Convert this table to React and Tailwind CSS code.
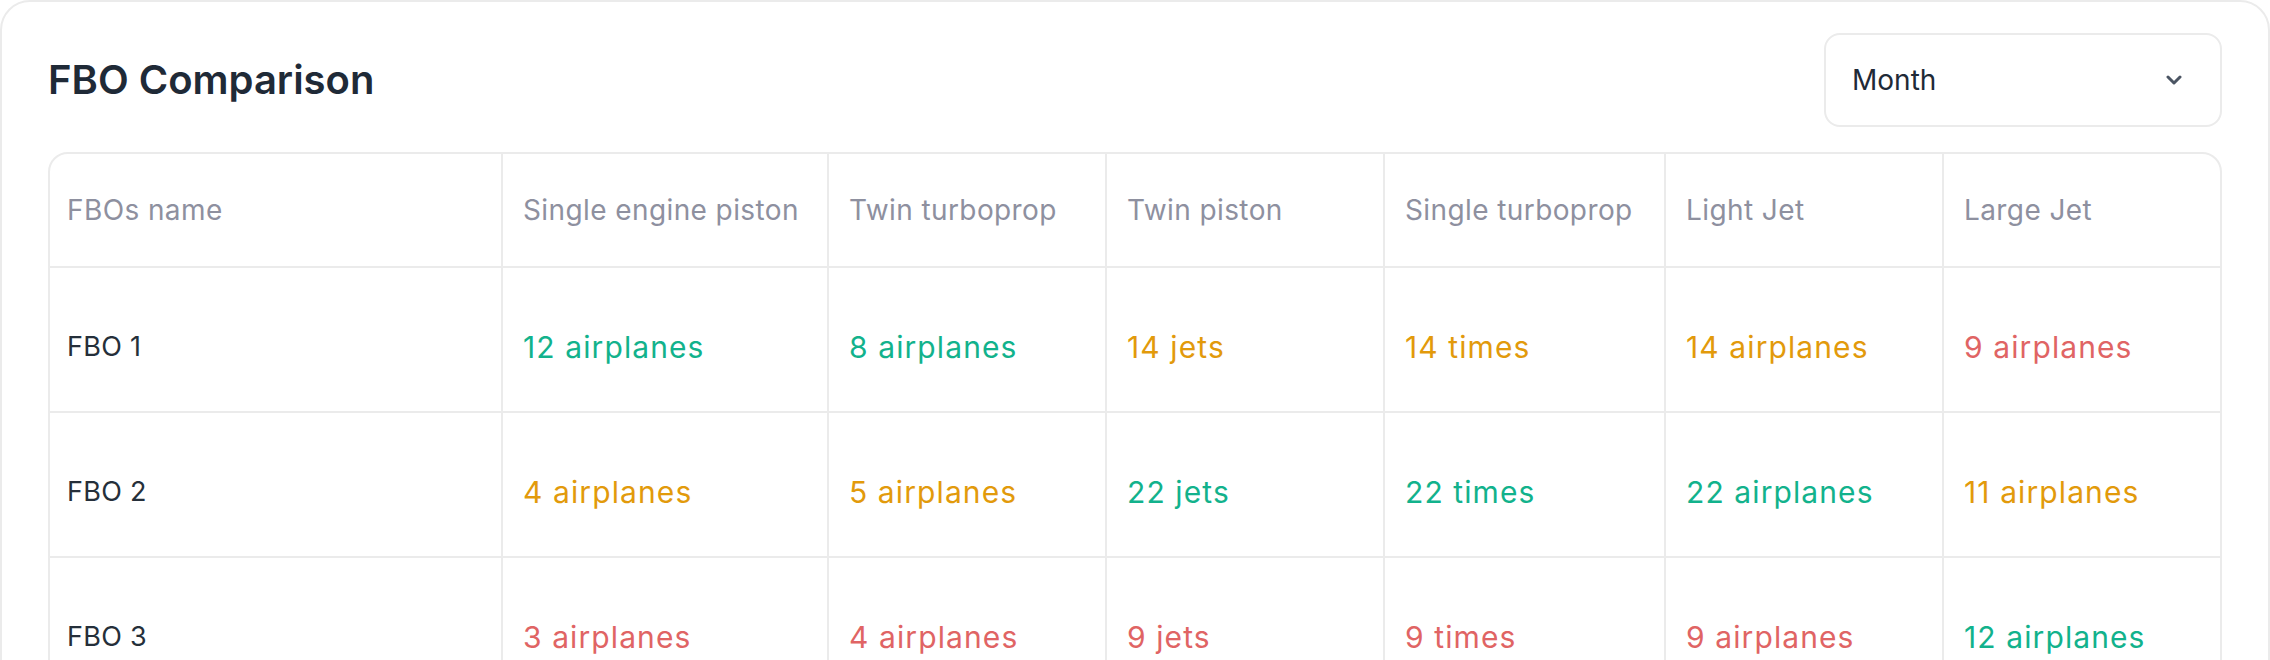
import React from "react";

const headers = [
  "FBOs name",
  "Single engine piston",
  "Twin turboprop",
  "Twin piston",
  "Single turboprop",
  "Light Jet",
  "Large Jet",
];

const G = "text-[#12b28c]";
const O = "text-[#e29a0b]";
const R = "text-[#e06464]";

const rows = [
  {
    name: "FBO 1",
    cells: [
      ["12 airplanes", G],
      ["8 airplanes", G],
      ["14 jets", O],
      ["14 times", O],
      ["14 airplanes", O],
      ["9 airplanes", R],
    ],
  },
  {
    name: "FBO 2",
    cells: [
      ["4 airplanes", O],
      ["5 airplanes", O],
      ["22 jets", G],
      ["22 times", G],
      ["22 airplanes", G],
      ["11 airplanes", O],
    ],
  },
  {
    name: "FBO 3",
    cells: [
      ["3 airplanes", R],
      ["4 airplanes", R],
      ["9 jets", R],
      ["9 times", R],
      ["9 airplanes", R],
      ["12 airplanes", G],
    ],
  },
];

export default function App() {
  return (
    <div className="w-[2270px] h-[660px] overflow-hidden bg-white font-['Inter',sans-serif]">
      <div className="w-full h-[720px] border-2 border-[#ebebeb] rounded-[30px] pt-[31px] px-[46px]">
        <div className="flex items-center justify-between">
          <h1 className="text-[40px] font-semibold text-[#1f2a37]">
            FBO Comparison
          </h1>
          <div className="w-[398px] h-[94px] border-2 border-[#ebebeb] rounded-[16px] flex items-center justify-between pl-[26px] pr-[38px]">
            <span className="text-[28px] text-[#1f2a37]">Month</span>
            <svg width="16" height="10" viewBox="0 0 16 10" fill="none">
              <path d="M2 2l6 6 6-6" stroke="#4b5563" strokeWidth="3" strokeLinecap="round" strokeLinejoin="round" />
            </svg>
          </div>
        </div>
        <div className="mt-[25px] border-2 border-[#ebebeb] rounded-t-[20px] overflow-hidden grid grid-cols-[451px_326px_278px_278px_281px_278px_278px]">
          {headers.map((h, i) => (
            <div
              key={h}
              className={`h-[112px] flex items-center ${i === 0 ? "pl-[17px]" : "pl-[20px] border-l-2 border-[#ebebeb]"} text-[28px] tracking-[0.4px] text-[#8e909f] whitespace-nowrap`}
            >
              {h}
            </div>
          ))}
          {rows.map((r) => (
            <React.Fragment key={r.name}>
              <div className="h-[145px] border-t-2 border-[#ebebeb] flex items-center pt-[16px] pl-[17px] text-[27px] tracking-[0.3px] text-[#252f3a]">
                {r.name}
              </div>
              {r.cells.map(([t, c], j) => (
                <div
                  key={j}
                  className={`h-[145px] border-t-2 border-l-2 border-[#ebebeb] flex items-center pt-[16px] pl-[20px] text-[30px] tracking-[1.1px] whitespace-nowrap ${c}`}
                >
                  {t}
                </div>
              ))}
            </React.Fragment>
          ))}
        </div>
      </div>
    </div>
  );
}
